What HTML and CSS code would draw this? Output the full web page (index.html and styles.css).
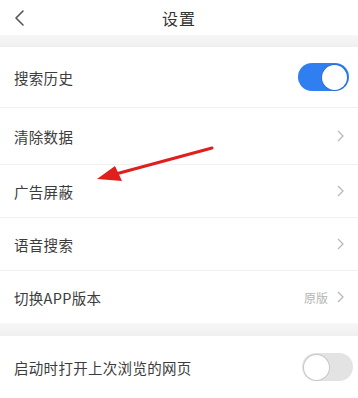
FILE: index.html
```html
<!DOCTYPE html>
<html lang="zh">
<head>
<meta charset="utf-8">
<link rel="stylesheet" href="styles.css">
</head>
<body>
<div class="page">
  <header class="topbar">
    <svg class="back" width="12" height="18" viewBox="0 0 12 18"><path d="M10 2 L3 9 L10 16" fill="none" stroke="#555" stroke-width="1.6" stroke-linecap="round" stroke-linejoin="round"/></svg>
    <div class="title">设置</div>
  </header>
  <div class="band band-top"></div>
  <div class="group">
    <div class="row row-1">
      <span class="label">搜索历史</span>
      <span class="toggle on"><span class="knob"></span></span>
    </div>
    <div class="row row-2">
      <span class="label">清除数据</span>
      <svg class="chev" width="8" height="12" viewBox="0 0 8 12"><path d="M2 1 L7 6 L2 11" fill="none" stroke="#b8b8b8" stroke-width="1.3"/></svg>
    </div>
    <div class="row row-3">
      <span class="label">广告屏蔽</span>
      <svg class="chev" width="8" height="12" viewBox="0 0 8 12"><path d="M2 1 L7 6 L2 11" fill="none" stroke="#b8b8b8" stroke-width="1.3"/></svg>
    </div>
    <div class="row row-4">
      <span class="label">语音搜索</span>
      <svg class="chev" width="8" height="12" viewBox="0 0 8 12"><path d="M2 1 L7 6 L2 11" fill="none" stroke="#b8b8b8" stroke-width="1.3"/></svg>
    </div>
    <div class="row row-5 last">
      <span class="label">切换APP版本</span>
      <span class="right"><span class="value">原版</span><svg class="chev" width="8" height="12" viewBox="0 0 8 12"><path d="M2 1 L7 6 L2 11" fill="none" stroke="#b8b8b8" stroke-width="1.3"/></svg></span>
    </div>
  </div>
  <div class="band band-mid"></div>
  <div class="group">
    <div class="row row-6 last">
      <span class="label">启动时打开上次浏览的网页</span>
      <span class="toggle off"><span class="knob"></span></span>
    </div>
  </div>
  <svg class="arrow" width="358" height="398" viewBox="0 0 358 398">
    <line x1="212" y1="148" x2="112" y2="175" stroke="#e0201c" stroke-width="3" stroke-linecap="round"/>
    <polygon points="97,179 115,166 122,181" fill="#e0201c"/>
  </svg>
</div>
</body>
</html>
```
FILE: styles.css
```css
* { box-sizing: border-box; }
html, body { margin: 0; padding: 0; background: #fff; }
body {
  font-family: "Noto Sans CJK SC", "Noto Sans", sans-serif;
  width: 358px;
  height: 398px;
  overflow: hidden;
}
.page { position: relative; width: 358px; height: 398px; }
.topbar {
  height: 35px;
  display: flex;
  align-items: center;
  justify-content: center;
  position: relative;
  background: #fff;
}
.back { position: absolute; left: 13px; top: 9px; }
.title { font-size: 16px; color: #333; letter-spacing: 1px; }
.band { background: #f3f3f3; }
.band-top { height: 12px; background: linear-gradient(#f7f7f7, #efefef); }
.band-mid { height: 13px; background: linear-gradient(#f7f7f7, #efefef); }
.group { background: #fff; }
.row {
  display: flex;
  align-items: center;
  justify-content: space-between;
  padding: 0 10px 0 14px;
  border-bottom: 1px solid #f0f0f0;
}
.row.last { border-bottom: none; }
.row-1 { height: 61px; }
.row-2 { height: 57px; }
.row-3 { height: 53px; }
.row-4 { height: 53px; }
.row-5 { height: 52px; }
.row-6 { height: 62px; }
.label { font-size: 14.5px; color: #3c3c3c; letter-spacing: 0.3px; }
.chev { margin-right: 4px; }
.right { display: flex; align-items: center; gap: 8px; }
.value { font-size: 12px; color: #b4b4b4; }
.toggle {
  width: 51px;
  height: 28px;
  border-radius: 14px;
  display: flex;
  align-items: center;
  padding: 2px;
}
.toggle.on { background: #2f7ff0; justify-content: flex-end; margin-right: -1px; }
.toggle.off { background: #e3e3e3; justify-content: flex-start; margin-right: -5px; }
.knob {
  width: 25px;
  height: 25px;
  border-radius: 50%;
  background: #fff;
  box-shadow: 0 0 0 1px rgba(0,0,0,0.12);
}
.arrow { position: absolute; left: 0; top: 0; pointer-events: none; }
```
